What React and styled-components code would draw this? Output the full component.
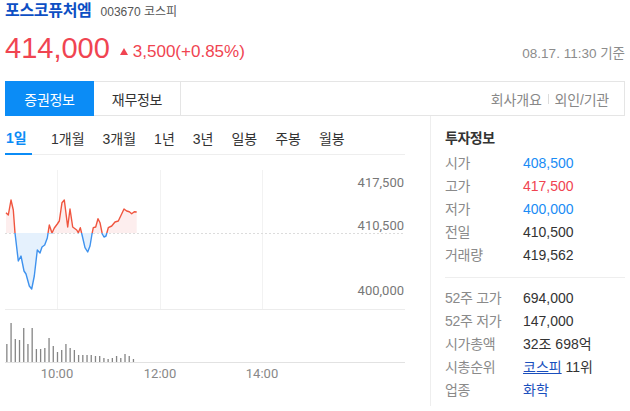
import React from "react";
import styled, { createGlobalStyle } from "styled-components";

const Global = createGlobalStyle`
  html, body { margin: 0; padding: 0; background: #fff; }
  body { font-family: "Liberation Sans", "Noto Sans CJK KR", sans-serif; color: #333; }
`;

const Page = styled.div`
  width: 620px;
  padding: 0 5px;
`;

const TitleRow = styled.div`
  display: flex;
  align-items: baseline;
  height: 22px;
  line-height: 22px;
`;

const Name = styled.span`
  font-size: 16px;
  font-weight: 700;
  color: #0d4fc4;
  letter-spacing: -0.3px;
`;

const Code = styled.span`
  font-size: 12px;
  color: #555;
  margin-left: 9px;
`;

const PriceRow = styled.div`
  display: flex;
  align-items: baseline;
  margin-top: 9px;
  height: 35px;
  line-height: 35px;
`;

const Price = styled.span`
  font-size: 29px;
  color: #f04451;
`;

const Change = styled.span`
  display: inline-flex;
  align-items: center;
  font-size: 17px;
  color: #f04451;
  margin-left: 10px;
  position: relative;
  top: -3px;
`;

const Tri = styled.svg`
  width: 8px;
  height: 7px;
  margin-right: 5px;
`;

const Stamp = styled.span`
  margin-left: auto;
  font-size: 13.5px;
  color: #8c8c8c;
`;

const TabBar = styled.div`
  margin-top: 15px;
  display: flex;
  align-items: stretch;
  height: 35px;
  box-sizing: border-box;
  border: 1px solid #e5e5e5;
`;

const Tab = styled.div`
  display: flex;
  align-items: center;
  justify-content: center;
  font-size: 14px;
  letter-spacing: -0.3px;
  box-sizing: border-box;
  ${(p) =>
    p.$active
      ? `
    width: 89px;
    margin: -1px 0 -1px -1px;
    background: #0b8cf6;
    color: #fff;
  `
      : `
    width: 87px;
    color: #333;
    border-right: 1px solid #e5e5e5;
  `}
`;

const TabLinks = styled.div`
  margin-left: auto;
  display: flex;
  align-items: center;
  padding-right: 15px;
  font-size: 14px;
  letter-spacing: -0.2px;
  color: #888;
`;

const Sep = styled.span`
  display: inline-block;
  width: 1px;
  height: 10px;
  background: #dcdcdc;
  margin: 0 6px;
`;

const Main = styled.div`
  display: flex;
  align-items: flex-start;
`;

const LeftCol = styled.div`
  width: 400px;
`;

const PeriodRow = styled.div`
  display: flex;
  height: 38px;
  border-bottom: 1px solid #eeeeee;
  gap: 18px;
`;

const Period = styled.div`
  display: flex;
  align-items: center;
  padding-top: 4px;
  box-sizing: border-box;
  font-size: 14px;
  letter-spacing: 0px;
  margin-bottom: -1px;
  ${(p) =>
    p.$active
      ? `
    width: 27px;
    padding-left: 1px;
    margin-right: 1px;
    color: #0b8cf6;
    font-weight: 700;
    border-bottom: 2px solid #0b8cf6;
  `
      : `
    color: #333;
  `}
`;

const Chart = styled.svg`
  display: block;
  width: 400px;
  height: 231px;
`;

const RightCol = styled.div`
  margin-left: 25px;
  width: 195px;
  box-sizing: border-box;
  border-left: 1px solid #eeeeee;
  padding: 11px 0 4px 14px;
`;

const InfoTitle = styled.div`
  font-size: 14px;
  font-weight: 700;
  color: #333;
  line-height: 23px;
  margin-bottom: 2px;
  letter-spacing: -0.5px;
`;

const InfoRow = styled.div`
  display: flex;
  height: 23px;
  line-height: 23px;
  font-size: 14px;
`;

const Label = styled.span`
  width: 78px;
  color: #8a8a8a;
  letter-spacing: -0.3px;
`;

const Value = styled.span`
  color: ${(p) => p.$color || "#333"};
`;

const Link = styled.a`
  color: #1a4fbd;
  text-decoration: ${(p) => (p.$underline ? "underline" : "none")};
`;

const Divider = styled.div`
  height: 1px;
  background: #eeeeee;
  margin: 10px 0 9px;
`;

const pricePts = [
  [6, 211.7], [8.3, 214], [11, 199], [13.3, 209], [15, 232], [18.3, 260], [21, 255],
  [24, 270], [26, 273], [29.3, 285], [31.7, 288], [34.3, 275], [37.3, 249], [40, 252],
  [42, 246], [44.7, 244], [47.3, 237], [49.3, 224], [52, 232], [54.3, 227], [57.3, 223],
  [59.3, 220], [62, 201.7], [64.3, 199], [67.7, 226], [70, 208], [72.7, 226], [76.7, 229],
  [78.3, 231.7], [80.3, 226.7], [82.3, 235], [85, 246.7], [87.7, 251], [90, 245], [92, 233],
  [93.3, 226.7], [95.7, 226], [98, 217.7], [100, 221.7], [102.3, 233], [104, 236], [106, 235],
  [108.3, 226.7], [111.7, 225], [115, 221], [118.3, 220], [120.7, 215], [124, 208],
  [126.7, 210], [129.3, 210.7], [131.7, 212.7], [134.3, 210.7], [136.7, 211],
];

const volumes = [18, 39, 23, 22, 34, 18, 34, 13, 13, 14, 24, 16, 10, 12, 18, 14, 12, 7, 7, 7, 7, 6, 6, 4, 3, 4, 6, 4, 8, 6, 3];

const BASE = 232;

function PriceChart() {
  const line = pricePts.map((p, i) => `${i ? "L" : "M"}${p[0]} ${p[1]}`).join(" ");
  const last = pricePts[pricePts.length - 1];
  const area = `${line} L${last[0]} ${BASE} L${pricePts[0][0]} ${BASE} Z`;
  return (
    <Chart viewBox="5 154 400 231">
      <defs>
        <clipPath id="above">
          <rect x="0" y="150" width="410" height={BASE - 150} />
        </clipPath>
        <clipPath id="below">
          <rect x="0" y={BASE} width="410" height="100" />
        </clipPath>
      </defs>
      {[57, 160, 262].map((x) => (
        <line key={x} x1={x + 0.5} x2={x + 0.5} y1="169" y2="308" stroke="#f2f2f2" strokeWidth="1" />
      ))}
      <line x1="5" x2="405" y1="308.5" y2="308.5" stroke="#ececec" strokeWidth="1" />
      <line x1="5" x2="405" y1={BASE + 0.5} y2={BASE + 0.5} stroke="#dcdcdc" strokeWidth="1" strokeDasharray="2 2" />
      <path d={area} fill="#fdeeee" clipPath="url(#above)" />
      <path d={area} fill="#e5f1fd" clipPath="url(#below)" />
      <path d={line} fill="none" stroke="#f0553f" strokeWidth="1.4" strokeLinejoin="round" clipPath="url(#above)" />
      <path d={line} fill="none" stroke="#3e92ee" strokeWidth="1.4" strokeLinejoin="round" clipPath="url(#below)" />
      <g fontFamily="Roboto, sans-serif" fontSize="13" fill="#777" textAnchor="end">
        <text x="404" y="186">417,500</text>
        <text x="404" y="229">410,500</text>
        <text x="404" y="294">400,000</text>
      </g>
      {volumes.map((h, i) => (
        <rect key={i} x={6.2 + i * 4.22} y={361 - h} width="1.3" height={h} fill="#858585" />
      ))}
      <line x1="5" x2="405" y1="361.5" y2="361.5" stroke="#e2e2e2" strokeWidth="1" />
      <g fontFamily="Roboto, sans-serif" fontSize="13" fill="#888" textAnchor="middle">
        <text x="57" y="377">10:00</text>
        <text x="160" y="377">12:00</text>
        <text x="262" y="377">14:00</text>
      </g>
    </Chart>
  );
}

const periods = ["1일", "1개월", "3개월", "1년", "3년", "일봉", "주봉", "월봉"];

export default function App() {
  return (
    <>
      <Global />
      <Page>
        <TitleRow>
          <Name>포스코퓨처엠</Name>
          <Code>003670 코스피</Code>
        </TitleRow>
        <PriceRow>
          <Price>414,000</Price>
          <Change>
            <Tri viewBox="0 0 8 7">
              <polygon points="4,0 8,7 0,7" fill="#f04451" />
            </Tri>
            3,500(+0.85%)
          </Change>
          <Stamp>08.17. 11:30 기준</Stamp>
        </PriceRow>
        <TabBar>
          <Tab $active>증권정보</Tab>
          <Tab>재무정보</Tab>
          <TabLinks>
            회사개요<Sep />외인/기관
          </TabLinks>
        </TabBar>
        <Main>
          <LeftCol>
            <PeriodRow>
              {periods.map((p, i) => (
                <Period key={p} $active={i === 0}>
                  {p}
                </Period>
              ))}
            </PeriodRow>
            <PriceChart />
          </LeftCol>
          <RightCol>
            <InfoTitle>투자정보</InfoTitle>
            <InfoRow><Label>시가</Label><Value $color="#1a8cf5">408,500</Value></InfoRow>
            <InfoRow><Label>고가</Label><Value $color="#f04451">417,500</Value></InfoRow>
            <InfoRow><Label>저가</Label><Value $color="#1a8cf5">400,000</Value></InfoRow>
            <InfoRow><Label>전일</Label><Value>410,500</Value></InfoRow>
            <InfoRow><Label>거래량</Label><Value>419,562</Value></InfoRow>
            <Divider />
            <InfoRow><Label>52주 고가</Label><Value>694,000</Value></InfoRow>
            <InfoRow><Label>52주 저가</Label><Value>147,000</Value></InfoRow>
            <InfoRow><Label>시가총액</Label><Value>32조 698억</Value></InfoRow>
            <InfoRow><Label>시총순위</Label><Value><Link $underline href="#">코스피</Link> 11위</Value></InfoRow>
            <InfoRow><Label>업종</Label><Value><Link href="#">화학</Link></Value></InfoRow>
          </RightCol>
        </Main>
      </Page>
    </>
  );
}
